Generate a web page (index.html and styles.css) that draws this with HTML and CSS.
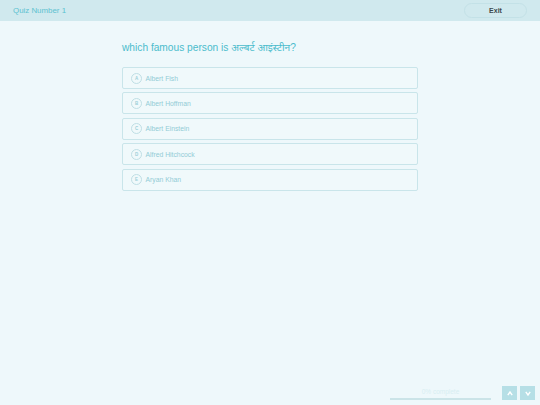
FILE: index.html
```html
<!DOCTYPE html>
<html>
<head>
<meta charset="utf-8">
<link rel="stylesheet" href="styles.css">
</head>
<body>
<div class="page">
  <header class="topbar">
    <div class="quiz-title">Quiz Number 1</div>
    <button class="exit-btn">Exit</button>
  </header>
  <main class="content">
    <div class="quiz">
      <h1 class="question">which famous person is अल्बर्ट आइंस्टीन?</h1>
      <ul class="options">
        <li class="option"><span class="letter">A</span><span class="label">Albert Fish</span></li>
        <li class="option"><span class="letter">B</span><span class="label">Albert Hoffman</span></li>
        <li class="option"><span class="letter">C</span><span class="label">Albert Einstein</span></li>
        <li class="option"><span class="letter">D</span><span class="label">Alfred Hitchcock</span></li>
        <li class="option"><span class="letter">E</span><span class="label">Aryan Khan</span></li>
      </ul>
    </div>
  </main>
  <footer class="footer">
    <div class="progress">
      <div class="progress-text">0% complete</div>
      <div class="progress-bar"></div>
    </div>
    <div class="nav">
      <button class="nav-btn"><svg width="6" height="5" viewBox="0 0 6 5"><path d="M0.8 4.2 L3 1 L5.2 4.2" fill="none" stroke="#fff" stroke-width="1.4"/></svg></button>
      <button class="nav-btn"><svg width="6" height="5" viewBox="0 0 6 5"><path d="M0.8 0.8 L3 4 L5.2 0.8" fill="none" stroke="#fff" stroke-width="1.4"/></svg></button>
    </div>
  </footer>
</div>
</body>
</html>
```

FILE: styles.css
```css
html, body {
  margin: 0;
  padding: 0;
  height: 100%;
}
body {
  background: #eef8fb;
  font-family: "Liberation Sans", Arial, "Noto Sans", sans-serif;
}
.page {
  display: flex;
  flex-direction: column;
  height: 405px;
}
.topbar {
  height: 21px;
  background: #d0e9ee;
  display: flex;
  align-items: center;
  justify-content: space-between;
  padding: 0 13px 0 13px;
  box-sizing: border-box;
}
.quiz-title {
  font-size: 7.9px;
  color: #5cc2d0;
}
.exit-btn {
  width: 63px;
  height: 15px;
  border: 1px solid #c3e1e7;
  border-radius: 8px;
  background: transparent;
  font-family: "Liberation Sans", Arial, sans-serif;
  font-size: 7px;
  font-weight: bold;
  color: #3d4a4d;
  padding: 0;
}
.content {
  flex: 1;
  display: flex;
  justify-content: center;
}
.quiz {
  width: 296px;
  padding-top: 20px;
}
.question {
  margin: 0 0 12px 0;
  font-size: 10.2px;
  font-weight: normal;
  color: #4bbccc;
  line-height: 14px;
  font-family: "Liberation Sans", Arial, "Noto Sans", sans-serif;
}
.options {
  list-style: none;
  margin: 0;
  padding: 0;
  display: flex;
  flex-direction: column;
  gap: 3.4px;
}
.option {
  box-sizing: border-box;
  height: 22px;
  border: 1px solid #c9e5ea;
  border-radius: 2px;
  display: flex;
  align-items: center;
  padding-left: 8px;
  gap: 3.5px;
  background: #f0f9fb;
}
.letter {
  width: 9px;
  height: 9px;
  border: 1px solid #bfdfe5;
  border-radius: 50%;
  font-size: 4.5px;
  font-weight: bold;
  color: #9ccfd8;
  display: flex;
  align-items: center;
  justify-content: center;
}
.label {
  font-size: 6.8px;
  color: #92ccd6;
}
.footer {
  display: flex;
  justify-content: flex-end;
  align-items: flex-end;
  padding: 0 5px 5px 0;
  gap: 11px;
}
.progress {
  width: 101px;
  display: flex;
  flex-direction: column;
  align-items: center;
  gap: 3px;
}
.progress-text {
  font-size: 6.5px;
  color: #d8eef2;
}
.progress-bar {
  width: 100%;
  height: 2px;
  background: #cbe4e8;
}
.nav {
  display: flex;
  gap: 3px;
}
.nav-btn {
  width: 15px;
  height: 14px;
  background: #b6dfe6;
  border: none;
  padding: 0;
  display: flex;
  align-items: center;
  justify-content: center;
}
```
